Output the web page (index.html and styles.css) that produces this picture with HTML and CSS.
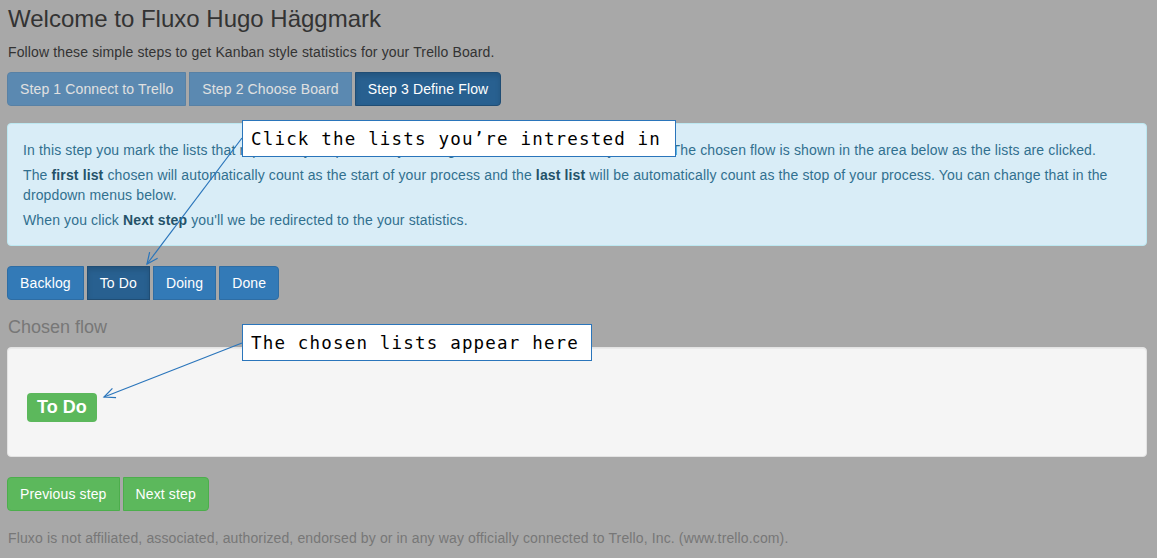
FILE: index.html
```html
<!DOCTYPE html>
<html>
<head>
<meta charset="utf-8">
<title>Fluxo</title>
<link rel="stylesheet" href="styles.css">
</head>
<body>
<div class="page">
  <h1 class="title">Welcome to Fluxo Hugo Häggmark</h1>
  <p class="intro">Follow these simple steps to get Kanban style statistics for your Trello Board.</p>
  <div class="btn-group steps">
    <span class="btn btn-primary disabled">Step 1 Connect to Trello</span>
    <span class="btn btn-primary disabled">Step 2 Choose Board</span>
    <span class="btn btn-primary active">Step 3 Define Flow</span>
  </div>
  <div class="alert">
    <p>In this step you mark the lists that represent your process by clicking on them in the order of your flow. The chosen flow is shown in the area below as the lists are clicked.</p>
    <p>The <b>first list</b> chosen will automatically count as the start of your process and the <b>last list</b> will be automatically count as the stop of your process. You can change that in the dropdown menus below.</p>
    <p>When you click <b>Next step</b> you'll we be redirected to the your statistics.</p>
  </div>
  <div class="btn-group lists">
    <span class="btn btn-primary">Backlog</span>
    <span class="btn btn-primary active">To Do</span>
    <span class="btn btn-primary">Doing</span>
    <span class="btn btn-primary">Done</span>
  </div>
  <h4 class="section-title">Chosen flow</h4>
  <div class="well">
    <span class="label">To Do</span>
  </div>
  <div class="btn-group nav">
    <span class="btn btn-success">Previous step</span>
    <span class="btn btn-success">Next step</span>
  </div>
  <p class="footer-note">Fluxo is not affiliated, associated, authorized, endorsed by or in any way officially connected to Trello, Inc. (www.trello.com).</p>
</div>

<svg class="arrows" width="1157" height="558" viewBox="0 0 1157 558">
  <defs>
    <marker id="head" markerUnits="userSpaceOnUse" markerWidth="14" markerHeight="14" refX="12" refY="6" orient="auto">
      <path d="M1,1 L12,6 L1,11" fill="none" stroke="#2a75bb" stroke-width="1.2"/>
    </marker>
  </defs>
  <line x1="242" y1="138" x2="147" y2="264" stroke="#2a75bb" stroke-width="1.2" marker-end="url(#head)"/>
  <line x1="242" y1="343" x2="104" y2="397" stroke="#2a75bb" stroke-width="1.2" marker-end="url(#head)"/>
</svg>
<div class="callout callout-lists">Click the lists you’re intrested in</div>
<div class="callout callout-flow">The chosen lists appear here</div>
</body>
</html>
```

FILE: styles.css
```css
html, body {
  margin: 0;
  padding: 0;
}
body {
  position: relative;
  background: #a8a8a8;
  font-family: "Liberation Sans", Arial, Helvetica, sans-serif;
  font-size: 14px;
  line-height: 20px;
  letter-spacing: 0.13px;
  color: #333;
  width: 1157px;
  height: 558px;
  overflow: hidden;
}
.page {
  width: 1140px;
  padding: 6px 0 0 7px;
}
.title {
  margin: 0 0 10px 1px;
  font-size: 24px;
  font-weight: 500;
  line-height: 26.4px;
  letter-spacing: 0;
  color: #333;
}
.intro {
  margin: 0 0 10px 1px;
}
.btn-group {
  display: flex;
  gap: 3px;
}
.btn {
  display: inline-block;
  padding: 6px 12px;
  font-size: 14px;
  line-height: 20px;
  border: 1px solid transparent;
  color: #fff;
  white-space: nowrap;
  border-radius: 0;
}
.btn-group .btn:first-child {
  border-radius: 4px 0 0 4px;
}
.btn-group .btn:last-child {
  border-radius: 0 4px 4px 0;
}
.btn-primary {
  background: #337ab7;
  border-color: #2e6da4;
}
.btn-primary.disabled {
  opacity: 0.65;
}
.btn-primary.active {
  background: #286090;
  border-color: #204d74;
  box-shadow: inset 0 3px 5px rgba(0, 0, 0, 0.125);
}
.btn-success {
  background: #5cb85c;
  border-color: #4cae4c;
}
.steps {
  margin-bottom: 17px;
}
.alert {
  padding: 16px 15px 15px;
  background: #d9edf7;
  border: 1px solid #bce8f1;
  border-radius: 4px;
  color: #31708f;
  margin-bottom: 20px;
}
.alert p {
  margin: 0;
}
.alert p + p {
  margin-top: 5px;
}
.alert b {
  color: #245269;
  font-weight: bold;
}
.section-title {
  margin: 18px 0 9px 1px;
  font-size: 18px;
  font-weight: 500;
  line-height: 19.8px;
  letter-spacing: 0;
  color: #777;
}
.well {
  height: 110px;
  box-sizing: border-box;
  padding: 45px 19px 0;
  background: #f5f5f5;
  border: 1px solid #e3e3e3;
  border-radius: 4px;
  box-shadow: inset 0 1px 1px rgba(0, 0, 0, 0.05);
  margin-bottom: 20px;
}
.label {
  display: inline-block;
  padding: 5px 10px 5px;
  font-size: 18px;
  line-height: 19px;
  font-weight: bold;
  letter-spacing: 0;
  color: #fff;
  background: #5cb85c;
  border-radius: 4px;
}
.footer-note {
  margin: 17px 0 0 1px;
  color: #777;
}
.arrows {
  position: absolute;
  left: 0;
  top: 0;
  pointer-events: none;
}
.callout {
  position: absolute;
  box-sizing: border-box;
  height: 37px;
  display: flex;
  align-items: center;
  padding-left: 8px;
  background: #fff;
  border: 1px solid #2a75bb;
  font-family: "DejaVu Sans Mono", "Liberation Mono", monospace;
  font-size: 17.5px;
  letter-spacing: 1.18px;
  color: #000;
  white-space: nowrap;
}
.callout-lists {
  left: 242px;
  top: 120px;
  width: 434px;
}
.callout-flow {
  left: 242px;
  top: 324px;
  width: 350px;
}
```
